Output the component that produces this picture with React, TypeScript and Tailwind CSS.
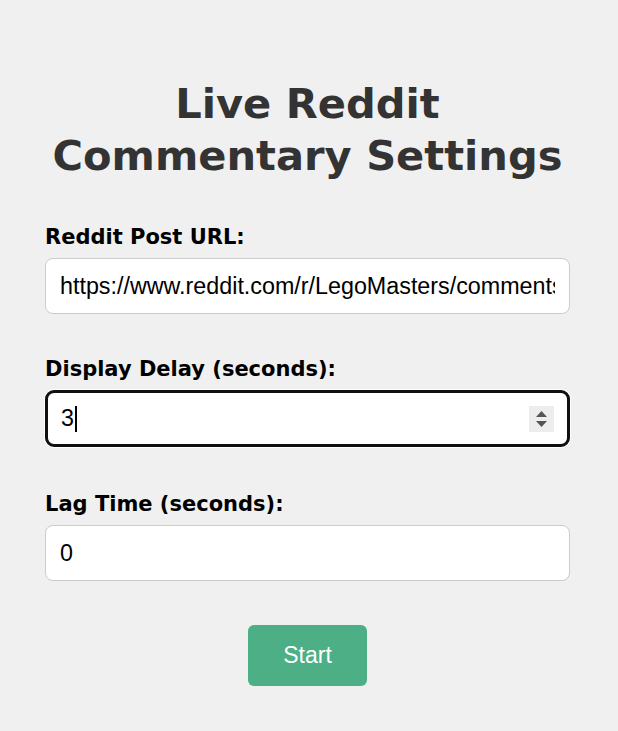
import React from "react";

const labelCls =
  "block mb-[7px] text-[21px] font-bold text-black leading-[27px] font-['DejaVu_Sans',sans-serif]";
const inputCls =
  "block w-full h-[56px] px-[14px] rounded-[8px] border border-[#cccccc] bg-white text-[23.3px] text-black outline-none font-['Liberation_Sans',Arial,sans-serif]";

export default function App() {
  return (
    <div className="min-h-screen bg-[#f0f0f0]">
      <div className="w-[525px] ml-[45px] pt-[78px]">
        <h1 className="text-center text-[41.6px] leading-[52px] font-bold text-[#333333] font-['DejaVu_Sans',sans-serif]">
          Live Reddit
          <br />
          Commentary Settings
        </h1>

        <div className="mt-[42px]">
          <label className={labelCls}>Reddit Post URL:</label>
          <input
            type="text"
            readOnly
            value="https://www.reddit.com/r/LegoMasters/comments/"
            className={inputCls}
          />
        </div>

        <div className="mt-[42px]">
          <label className={labelCls}>Display Delay (seconds):</label>
          {/* focused field with caret + spinner */}
          <div className="flex items-center w-full h-[57px] pl-[13px] pr-[13px] rounded-[9px] border-[3px] border-[#101010] bg-white shadow-[0_0_0_1px_#ffffff]">
            <span className="text-[23.3px] text-black font-['Liberation_Sans',Arial,sans-serif]">3</span>
            <span className="w-[2px] h-[26px] bg-black ml-[1px]" />
            <div className="ml-auto w-[25px] h-[26px] bg-[#ededed] flex items-center justify-center">
              <svg width="13" height="18" viewBox="0 0 13 18">
                <path d="M6.5 1 L12 7 L1 7 Z" fill="#555" />
                <path d="M1 11 L12 11 L6.5 17 Z" fill="#555" />
              </svg>
            </div>
          </div>
        </div>

        <div className="mt-[44px]">
          <label className={labelCls}>Lag Time (seconds):</label>
          <input type="text" readOnly value="0" className={inputCls} />
        </div>

        <div className="mt-[44px] flex justify-center">
          <button className="w-[119px] h-[61px] rounded-[6px] bg-[#4caf85] text-white text-[23px] font-['Liberation_Sans',Arial,sans-serif]">
            Start
          </button>
        </div>
      </div>
    </div>
  );
}
